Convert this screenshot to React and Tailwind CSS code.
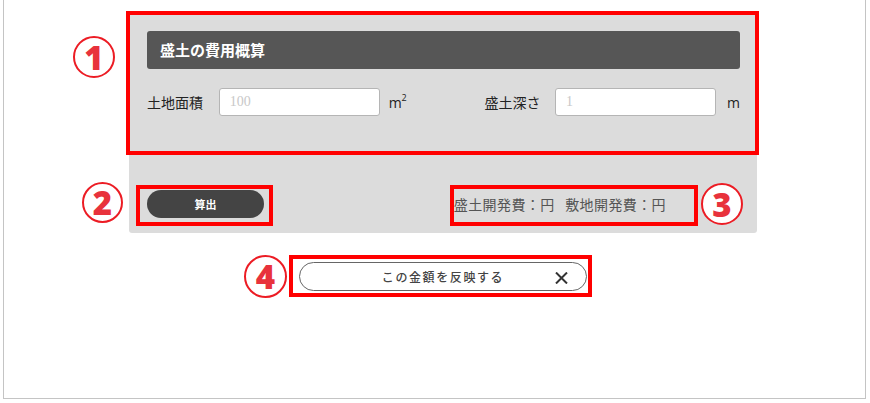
import React from 'react';

const jp = { fontFamily: '"Noto Sans CJK JP", "Noto Sans", sans-serif' };

// red annotation box drawn over the form
const Mark = ({ className }) => (
  <div className={`absolute border-[4px] border-[#ff0000] pointer-events-none ${className}`} />
);

// circled annotation number
const Num = ({ n, className }) => (
  <div
    className={`absolute flex items-center justify-center rounded-full border-2 border-[#ec1c24] bg-white text-[#e8323c] font-extrabold text-[33px] leading-none ${className}`}
    style={{ fontFamily: '"Open Sans", "Liberation Sans", sans-serif' }}
  >
    {n}
  </div>
);

const App = () => {
  return (
    <div className="relative w-[870px] h-[403px] bg-white overflow-hidden" style={jp}>
      <div className="ml-[3px] w-[863px] h-[399px] border-x border-b border-[#c4c4c4] flex flex-col">
        {/* calculator panel */}
        <div className="mt-[13px] ml-[125px] w-[628px] bg-[#dcdcdc] rounded-b-[3px] pt-[18px] pb-[15px] pl-[18px] pr-[17px]">
          <div className="h-[38px] bg-[#565656] rounded-[3px] flex items-center pl-[13px]">
            <span className="text-white font-bold text-[15px]">盛土の費用概算</span>
          </div>

          <div className="mt-[19px] flex items-center h-[28px]">
            <span className="w-[72px] text-[14px] text-[#222]">土地面積</span>
            <input
              className="w-[161px] h-[28px] bg-white border border-[#b5b5b5] rounded-[3px] px-[10px] text-[14px] placeholder-[#c8c8c8] outline-none"
              style={{ fontFamily: '"Liberation Serif", serif' }}
              placeholder="100"
            />
            <span className="ml-[9px] w-[40px] text-[14px] text-[#222] flex items-start" style={{ fontFamily: '"Open Sans", sans-serif' }}>
              m<span className="text-[9px] leading-none mt-[1px]">2</span>
            </span>
            <span className="ml-[56px] w-[71px] text-[14px] text-[#222]">盛土深さ</span>
            <input
              className="w-[161px] h-[28px] bg-white border border-[#b5b5b5] rounded-[3px] px-[10px] text-[14px] placeholder-[#c8c8c8] outline-none"
              style={{ fontFamily: '"Liberation Serif", serif' }}
              placeholder="1"
            />
            <span className="ml-[11px] text-[14px] text-[#222]" style={{ fontFamily: '"Open Sans", sans-serif' }}>m</span>
          </div>

          <div className="mt-[74px] flex items-center h-[28px]">
            <button className="w-[117px] h-[28px] rounded-full bg-[#444444] text-white font-bold text-[11px]">算出</button>
            <span className="ml-auto mr-[74px] text-[14px] text-[#555] tracking-[0.4px]">盛土開発費：円&nbsp;&nbsp;&nbsp;敷地開発費：円</span>
          </div>
        </div>

        {/* reflect button */}
        <button className="mt-[29px] ml-[295px] w-[288px] h-[29px] rounded-full bg-white border border-[#666] flex items-center relative">
          <span className="w-full text-center text-[12px] tracking-[1.6px] text-[#444] font-medium">この金額を反映する</span>
          <svg className="absolute left-[255px] top-[9px]" width="13" height="12" viewBox="0 0 13 12">
            <path d="M1 0.5 L12 11.5 M12 0.5 L1 11.5" stroke="#333" strokeWidth="2" fill="none" />
          </svg>
        </button>
      </div>

      {/* annotations */}
      <Mark className="left-[126px] top-[11px] w-[633px] h-[144px]" />
      <Mark className="left-[136px] top-[185px] w-[137px] h-[41px]" />
      <Mark className="left-[450px] top-[185px] w-[248px] h-[41px]" />
      <Mark className="left-[289px] top-[255px] w-[303px] h-[42px]" />
      <Num n="1" className="left-[73px] top-[36px] w-[42px] h-[42px]" />
      <Num n="2" className="left-[82px] top-[182px] w-[41px] h-[41px]" />
      <Num n="3" className="left-[701px] top-[183px] w-[42px] h-[42px]" />
      <Num n="4" className="left-[244px] top-[255px] w-[43px] h-[43px]" />
    </div>
  );
};

export default App;
